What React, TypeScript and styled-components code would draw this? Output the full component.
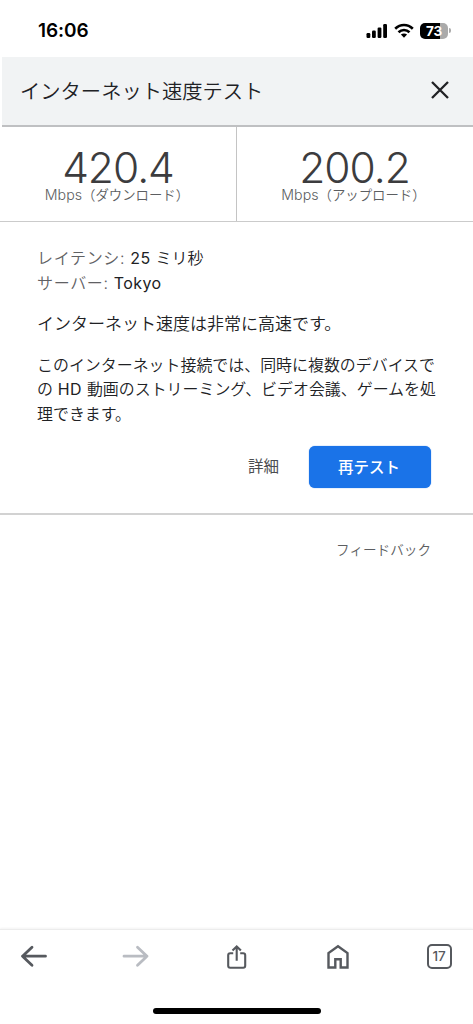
import React from "react";
import styled, { createGlobalStyle } from "styled-components";

const Global = createGlobalStyle`
  *, *::before, *::after { box-sizing: border-box; }
  body { margin: 0; background: #fff; }
  button { font: inherit; color: inherit; border: 0; padding: 0; background: none; }
  h1, p { margin: 0; font-weight: 400; }
`;

const Screen = styled.div`
  width: 473px;
  height: 1024px;
  display: flex;
  flex-direction: column;
  overflow: hidden;
  background: #fff;
  color: #202124;
  font-family: Inter, "Noto Sans CJK JP", sans-serif;
  font-size: 16px;
`;

const StatusBar = styled.div`
  height: 57px;
  flex: none;
  display: flex;
  align-items: center;
  justify-content: space-between;
  padding: 4px 22px 0 38px;
`;

const Clock = styled.span`
  font-size: 19px;
  font-weight: 600;
  line-height: 24px;
  letter-spacing: -0.05px;
  color: #000;
`;

const StatusIcons = styled.div`
  display: flex;
  align-items: center;
  gap: 6px;
`;

const Battery = styled.div`
  display: flex;
  align-items: center;
  gap: 1px;
`;

const BatteryBody = styled.div`
  width: 28px;
  height: 16px;
  border-radius: 5px;
  background: linear-gradient(90deg, #000 73%, #aaa 73%);
  color: #fff;
  font-size: 13.5px;
  font-weight: 700;
  line-height: 16px;
  text-align: center;
  letter-spacing: -0.2px;
`;

const BatteryTip = styled.div`
  width: 2px;
  height: 5px;
  border-radius: 0 2px 2px 0;
  background: #aaa;
`;

const Header = styled.header`
  height: 70px;
  flex: none;
  margin-left: 2px;
  display: flex;
  align-items: center;
  justify-content: space-between;
  padding: 0 24px 2px 18px;
  background: #f1f3f4;
  border-bottom: 2px solid #bfc0c2;
`;

const Title = styled.h1`
  padding-top: 3px;
  font-size: 20.3px;
  font-weight: 350;
  line-height: 30px;
`;

const CloseButton = styled.button`
  display: flex;
`;

const Results = styled.div`
  flex: none;
  height: 95px;
  display: grid;
  grid-template-columns: 237px 236px;
  border-bottom: 1px solid #cbcbcb;
`;

const Result = styled.div<{ $divided?: boolean }>`
  display: flex;
  flex-direction: column;
  align-items: center;
  padding-top: 24px;
  padding-right: ${(p) => (p.$divided ? "0" : "1px")};
  border-right: ${(p) => (p.$divided ? "1px solid #c4c4c4" : "0")};
`;

const Speed = styled.span`
  font-size: 42.5px;
  font-weight: 300;
  line-height: 34px;
  letter-spacing: -1px;
  color: #3c3c3e;
`;

const Unit = styled.span`
  display: flex;
  font-size: 13.4px;
  font-weight: 350;
  line-height: 20px;
  color: #5c5e61;
  padding-right: 2px;
`;

const UnitName = styled.span`
  font-size: 14.2px;
`;

const Details = styled.section`
  flex: none;
  height: 293px;
  display: flex;
  flex-direction: column;
  padding: 24px 35px 0 37px;
  border-bottom: 2px solid #d2d2d2;
`;

const Fact = styled.p`
  font-size: 16px;
  font-weight: 350;
  line-height: 24.5px;
  white-space: pre;
`;

const Label = styled.span`
  color: #5f6164;
  letter-spacing: 0.65px;
`;

const Verdict = styled.p`
  margin-top: 16px;
  font-size: 17px;
  font-weight: 350;
  line-height: 26px;
`;

const Description = styled.p`
  margin-top: 17px;
  font-size: 15.95px;
  font-weight: 350;
  line-height: 24.3px;
  white-space: nowrap;
`;

const Latin = styled.span`
  font-weight: 400;
  letter-spacing: 0.4px;
`;

const Actions = styled.div`
  display: flex;
  justify-content: flex-end;
  align-items: center;
  gap: 30px;
  margin-top: 19px;
  padding-right: 7px;
`;

const TextButton = styled.button`
  font-size: 15.5px;
  line-height: 24px;
  color: #4b4d50;
`;

const PrimaryButton = styled.button`
  width: 122px;
  height: 42px;
  border-radius: 6px;
  padding: 0 2px 1px 0;
  background: #1a73e8;
  color: #fff;
  font-size: 15.5px;
  font-weight: 500;
  box-shadow: 0 0 1px #1a73e8;
`;

const Footer = styled.footer`
  flex: 1;
  display: flex;
  justify-content: flex-end;
  align-items: flex-start;
  padding: 25px 42px 0 0;
`;

const Feedback = styled.button`
  font-size: 13.6px;
  font-weight: 350;
  line-height: 20px;
  color: #5c5e61;
`;

const Toolbar = styled.nav`
  height: 75px;
  flex: none;
  display: grid;
  grid-template-columns: repeat(5, 101.3px);
  justify-content: center;
  align-items: start;
  justify-items: center;
  padding-top: 12px;
  border-top: 1px solid #ececec;
  box-shadow: 0 -1px 2px rgba(0, 0, 0, 0.05);
`;

const ToolButton = styled.button<{ $muted?: boolean }>`
  display: flex;
  color: ${(p) => (p.$muted ? "#b9bcc2" : "#56595e")};
`;

const HomeArea = styled.div`
  height: 20px;
  flex: none;
  display: flex;
  justify-content: center;
  padding: 4px 0 0 1px;
`;

const HomeIndicator = styled.div`
  width: 168px;
  height: 6px;
  border-radius: 3px;
  background: #000;
`;

const SignalIcon = () => (
  <svg width="22" height="16" viewBox="0 0 22 16" fill="#000">
    <rect x="0.5" y="10" width="3.8" height="5" rx="1.2" />
    <rect x="6" y="7.5" width="3.8" height="7.5" rx="1.2" />
    <rect x="11.6" y="4.5" width="3.8" height="10.5" rx="1.2" />
    <rect x="17.2" y="1" width="3.8" height="14" rx="1.2" />
  </svg>
);

const WifiIcon = () => (
  <svg width="20" height="16" viewBox="0 0 20 16" fill="none" stroke="#000" strokeWidth="2.6">
    <path d="M1.2 5.8C6.3.8 13.7.8 18.8 5.8" />
    <path d="M4.5 9.3c3.2-3.1 7.8-3.1 11 0" />
    <path d="M6.9 11.6 10 14.8l3.1-3.2c-1.8-1.6-4.4-1.6-6.2 0Z" fill="#000" stroke="none" />
  </svg>
);

const CloseIcon = () => (
  <svg width="18" height="18" viewBox="0 0 18 18" fill="none" stroke="#202124" strokeWidth="2.3">
    <path d="m1 1 16 16M17 1 1 17" />
  </svg>
);

const ArrowIcon = ({ forward }: { forward?: boolean }) => (
  <svg width="28" height="28" viewBox="0 0 28 28" fill="none" stroke="currentColor" strokeWidth="2.8" strokeLinecap="round" strokeLinejoin="round">
    <path d={forward ? "M3 14.2h23M16.5 5.200l9.500 9-9.500 9" : "M25.500 14.200h-23M12 5.200l-9.500 9 9.500 9"} />
  </svg>
);

const ShareIcon = () => (
  <svg width="28" height="28" viewBox="0 0 28 28" fill="none" stroke="currentColor" strokeWidth="2.1">
    <path d="M10.2 11.200H7.200q-2 0-2 2v10.500q0 2 2 2h13q2 0 2-2V13.200q0-2-2-2h-3M13.700 18.800V5M9.500 8.600l4.200-4.200 4.200 4.200" />
  </svg>
);

const HouseIcon = () => (
  <svg width="28" height="28" viewBox="0 0 28 28" fill="none" stroke="currentColor" strokeWidth="2.4">
    <path d="M4.500 25.500V11L14 4.300l9.500 6.700v14.500h-6.800v-8.300h-5.400v8.300Z" />
  </svg>
);

const TabCount = styled.span`
  width: 25px;
  height: 25px;
  margin-top: 2px;
  border: 2px solid currentColor;
  border-radius: 5px;
  font-size: 13.5px;
  font-weight: 500;
  line-height: 21px;
  text-align: center;
`;

export default function App() {
  return (
    <>
      <Global />
      <Screen lang="ja">
        <StatusBar>
          <Clock>16:06</Clock>
          <StatusIcons>
            <SignalIcon />
            <WifiIcon />
            <Battery>
              <BatteryBody>73</BatteryBody>
              <BatteryTip />
            </Battery>
          </StatusIcons>
        </StatusBar>
        <Header>
          <Title>インターネット速度テスト</Title>
          <CloseButton aria-label="閉じる">
            <CloseIcon />
          </CloseButton>
        </Header>
        <Results>
          <Result $divided>
            <Speed>420.4</Speed>
            <Unit><UnitName>Mbps</UnitName>（ダウンロード）</Unit>
          </Result>
          <Result>
            <Speed>200.2</Speed>
            <Unit><UnitName>Mbps</UnitName>（アップロード）</Unit>
          </Result>
        </Results>
        <Details>
          <Fact><Label>レイテンシ: </Label><Latin>25 </Latin>ミリ秒</Fact>
          <Fact><Label>サーバー: </Label><Latin>Tokyo</Latin></Fact>
          <Verdict>インターネット速度は非常に高速です。</Verdict>
          <Description>
            このインターネット接続では、同時に複数のデバイスで<br />
            の<Latin> HD </Latin>動画のストリーミング、ビデオ会議、ゲームを処<br />
            理できます。
          </Description>
          <Actions>
            <TextButton>詳細</TextButton>
            <PrimaryButton>再テスト</PrimaryButton>
          </Actions>
        </Details>
        <Footer>
          <Feedback>フィードバック</Feedback>
        </Footer>
        <Toolbar>
          <ToolButton aria-label="戻る"><ArrowIcon /></ToolButton>
          <ToolButton aria-label="進む" $muted><ArrowIcon forward /></ToolButton>
          <ToolButton aria-label="共有"><ShareIcon /></ToolButton>
          <ToolButton aria-label="ホーム"><HouseIcon /></ToolButton>
          <ToolButton aria-label="タブ"><TabCount>17</TabCount></ToolButton>
        </Toolbar>
        <HomeArea>
          <HomeIndicator />
        </HomeArea>
      </Screen>
    </>
  );
}
